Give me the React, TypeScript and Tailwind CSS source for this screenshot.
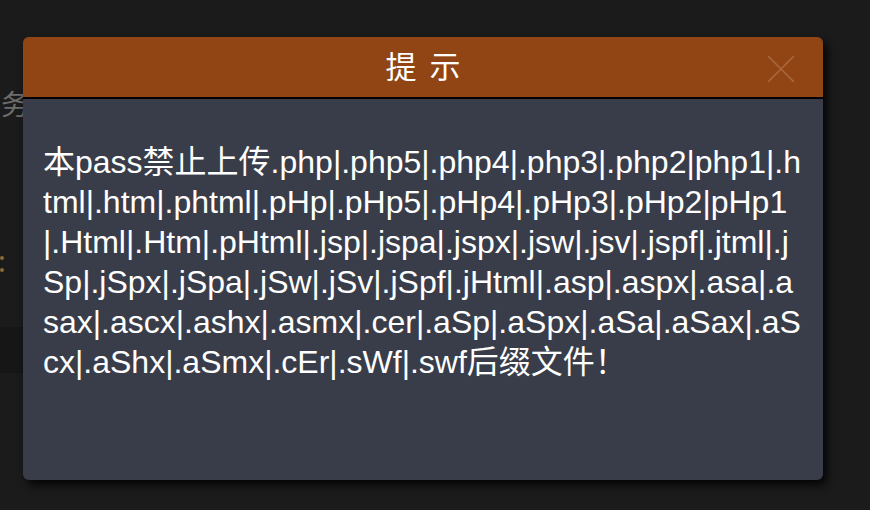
const MSG =
  "本pass禁止上传.php|.php5|.php4|.php3|.php2|php1|.html|.htm|.phtml|.pHp|.pHp5|.pHp4|.pHp3|.pHp2|pHp1|.Html|.Htm|.pHtml|.jsp|.jspa|.jspx|.jsw|.jsv|.jspf|.jtml|.jSp|.jSpx|.jSpa|.jSw|.jSv|.jSpf|.jHtml|.asp|.aspx|.asa|.asax|.ascx|.ashx|.asmx|.cer|.aSp|.aSpx|.aSa|.aSax|.aScx|.aShx|.aSmx|.cEr|.sWf|.swf后缀文件！";

export default function App() {
  return (
    <div
      className="relative w-[870px] h-[510px] overflow-hidden bg-[#1b1b1b]"
      style={{ fontFamily: '"Liberation Sans", "Noto Sans CJK SC", sans-serif' }}
    >
      {/* page behind the layer */}
      <div className="flex flex-col">
        <div className="mt-[86px] pl-[1px] text-[28px] leading-[40px] text-[#6e6e6e]">务</div>
        <div className="mt-[130px] flex flex-col gap-[8px]">
          <span className="block w-[4px] h-[4px] rounded-full bg-[#8a6a3a]" />
          <span className="block w-[4px] h-[4px] rounded-full bg-[#8a6a3a]" />
        </div>
        <div className="mt-[55px] w-[300px] h-[46px] bg-[#161616]" />
      </div>

      {/* dialog */}
      <div className="absolute left-[23px] top-[37px] w-[800px] h-[443px] rounded-[6px] overflow-hidden bg-[#393d49] shadow-[4px_5px_10px_rgba(0,0,0,0.85)] flex flex-col">
        <div className="relative h-[62px] shrink-0 bg-[#914514] border-b-2 border-black flex items-center justify-center">
          <span className="text-[31px] leading-none text-white tracking-[13px] pl-[13px]">提示</span>
          <svg
            className="absolute left-[744px] top-[18px]"
            width="28"
            height="28"
            viewBox="0 0 28 28"
            fill="none"
            stroke="#a8693f"
            strokeWidth="1.6"
          >
            <path d="M1 1L27 27M27 1L1 27" />
          </svg>
        </div>
        <div className="px-[20px] pt-[43px] text-[32px] leading-[40px] text-white break-all">
          {MSG}
        </div>
      </div>
    </div>
  );
}
